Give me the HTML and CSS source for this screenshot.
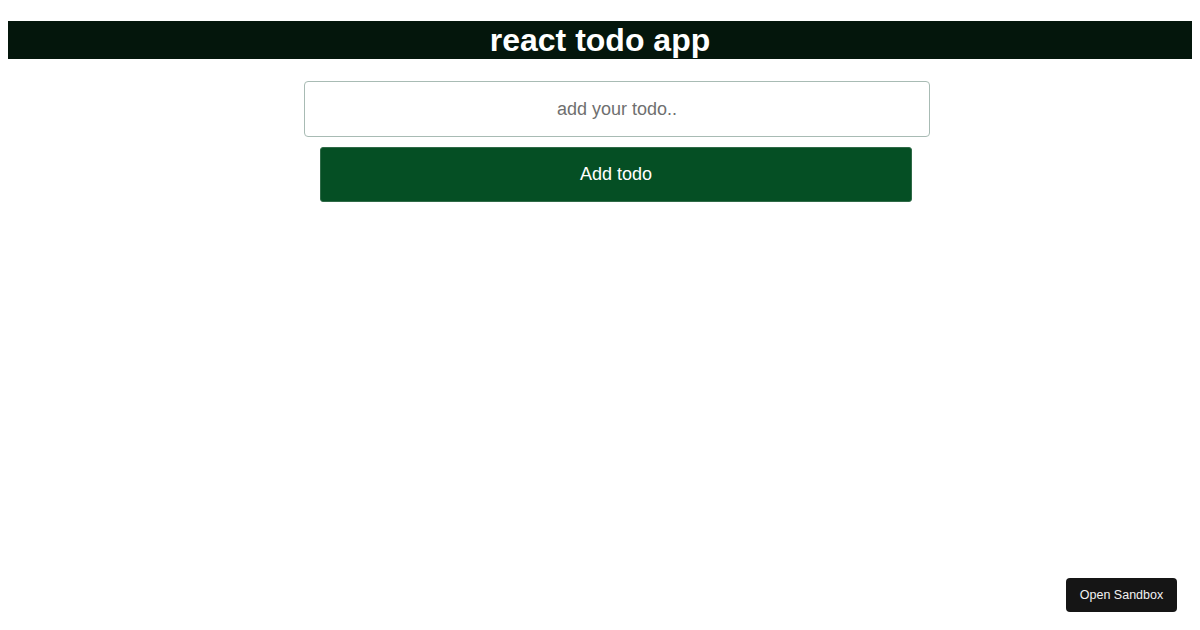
FILE: index.html
```html
<!DOCTYPE html>
<html>
<head>
<meta charset="utf-8">
<link rel="stylesheet" href="styles.css">
</head>
<body>
<h1 class="title">react todo app</h1>
<div class="form">
  <input class="todo-input" type="text" placeholder="add your todo..">
  <button class="add-btn">Add todo</button>
</div>
<a class="sandbox-btn">Open Sandbox</a>
</body>
</html>
```
FILE: styles.css
```css
html, body {
  background: #ffffff;
}
body {
  margin: 0 8px 8px 8px;
  padding-top: 21px;
  font-family: "Liberation Sans", Arial, sans-serif;
}
.title {
  margin: 0;
  height: 38px;
  background: #04160c;
  color: #ffffff;
  font-size: 32px;
  font-weight: bold;
  line-height: 38px;
  text-align: center;
}
.form {
  display: flex;
  flex-direction: column;
  align-items: center;
  margin-top: 22px;
  padding-left: 34px;
}
.todo-input {
  box-sizing: border-box;
  width: 626px;
  height: 56px;
  border: 1px solid #a8bbb4;
  border-radius: 4px;
  font-family: "Liberation Sans", Arial, sans-serif;
  font-size: 18px;
  text-align: center;
  color: #333;
  outline: none;
}
.todo-input::placeholder {
  color: #6f6f6f;
}
.add-btn {
  box-sizing: border-box;
  width: 592px;
  height: 55px;
  margin-top: 10px;
  margin-left: -2px;
  background: #054f24;
  border: 1px solid #2f6a47;
  border-radius: 3px;
  color: #ffffff;
  font-family: "Liberation Sans", Arial, sans-serif;
  font-size: 18px;
}
.sandbox-btn {
  position: fixed;
  right: 23px;
  bottom: 18px;
  box-sizing: border-box;
  width: 111px;
  height: 34px;
  line-height: 34px;
  background: #151515;
  color: #f2f2f2;
  border-radius: 4px;
  font-family: "Liberation Sans", Arial, sans-serif;
  font-size: 12.5px;
  text-align: center;
}
```
